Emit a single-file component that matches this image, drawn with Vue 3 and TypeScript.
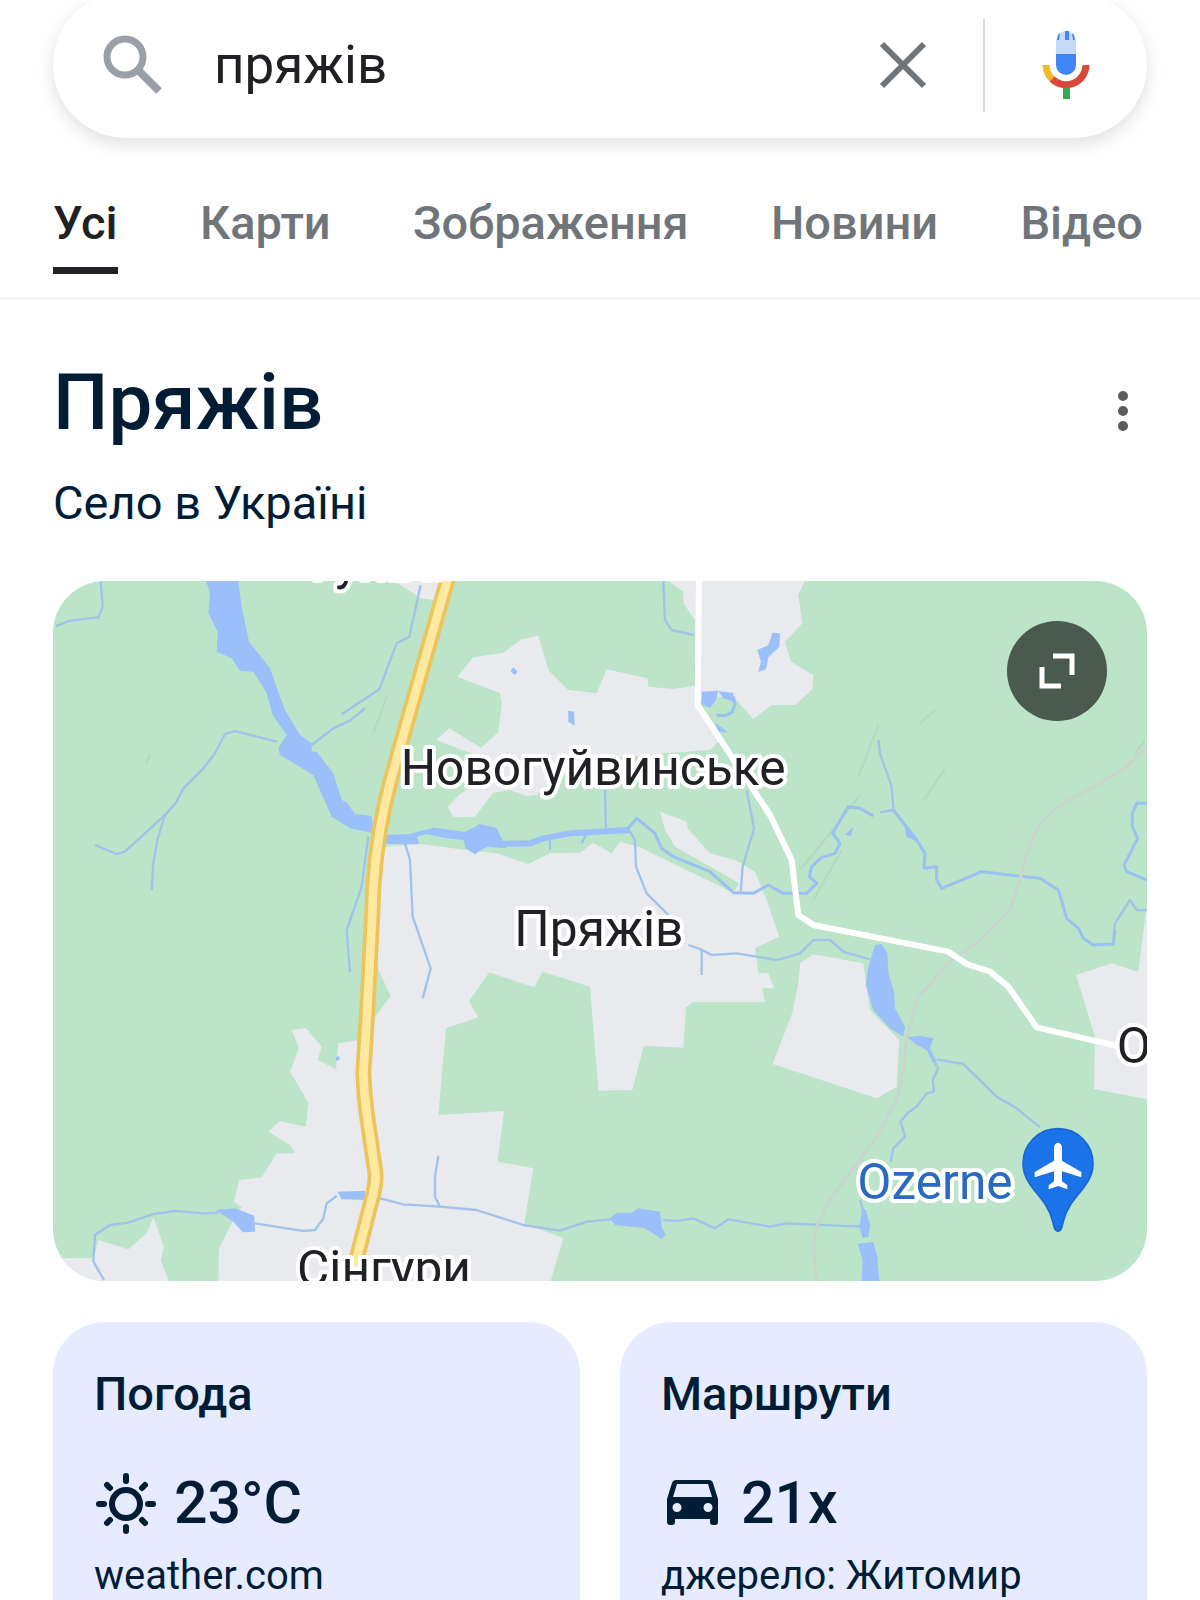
<script setup lang="ts">
import { ref } from 'vue'

interface Tab {
  id: string
  label: string
}

const query = ref('пряжів')
const activeTab = ref('all')

const tabs: Tab[] = [
  { id: 'all', label: 'Усі' },
  { id: 'maps', label: 'Карти' },
  { id: 'images', label: 'Зображення' },
  { id: 'news', label: 'Новини' },
  { id: 'video', label: 'Відео' },
]

const settlements: string[] = [
  '1030,33 1090,70 1110,85 1155,90 1175,33',
  '1222,320 1270,262 1360,248 1415,208 1465,197 1495,300 1555,360 1640,370 1670,298 1792,325 1795,350 1870,357 1935,347 1945,400 2010,510 1980,540 1870,548 1620,570 1500,640 1460,675 1430,678 1380,660 1330,668 1275,740 1210,742 1193,710 1230,672 1280,640 1290,560 1158,510 1198,475 1293,533 1345,487 1355,400 1350,370',
  '1855,33 1900,65 1900,100 1935,150 1943,400 1960,380 2050,380 2110,447 2165,405 2235,405 2287,358 2290,315 2223,275 2205,215 2257,160 2245,75 2265,33',
  '1005,830 1110,822 1250,840 1340,850 1435,882 1500,850 1590,848 1630,818 1685,850 1710,815 1770,832 2050,968 2068,940 1875,830 1845,780 1830,725 1912,755 1912,775 1980,850 2060,872 2115,905 2150,990 2188,1100 2115,1135 2125,1208 2155,1210 2172,1255 2137,1255 2145,1297 1930,1297 1908,1312 1900,1433 1782,1427 1747,1560 1645,1562 1620,1250 1478,1205 1453,1252 1318,1207 1257,1293 1285,1342 1188,1375 1165,1635 1362,1623 1343,1775 1450,1795 1423,1960 1540,2005 1502,2133 505,2133 507,2035 547,1955 575,1912 552,1895 568,1830 635,1822 680,1750 735,1750 720,1725 655,1685 690,1653 768,1670 775,1598 720,1505 747,1435 725,1380 768,1375 815,1430 803,1470 858,1498 865,1420 925,1410 975,1340 1022,1278 985,1200 975,1050',
  '9,2065 130,2065 145,2010 235,2038 290,1990 310,1940 342,2030 332,2070 357,2133 9,2133',
  '2250,1180 2290,1153 2440,1180 2460,1320 2548,1410 2540,1550 2480,1585 2168,1482 2228,1325 2245,1240',
  '3078,1215 3185,1180 3265,1205 3291,1000 3291,1588 3132,1557 3135,1400',
]

const lakes: string[] = [
  '468,33 565,33 575,110 597,215 660,295 672,330 705,420 750,495 785,520 785,545 800,545 850,610 875,690 890,697 915,732 965,738 972,790 900,775 845,740 790,615 690,555 685,535 710,495 668,435 650,370 610,305 570,303 545,265 500,245 503,185 475,130 480,70',
  '1000,795 1080,792 1150,773 1190,778 1245,786 1290,762 1340,775 1362,820 1368,835 1310,830 1275,853 1247,835 1240,810 1190,805 1130,792 1100,800 1108,822 1010,822',
  '1390,292 1403,305 1393,315 1382,303',
  '1555,422 1572,425 1574,467 1555,455',
  '2168,188 2190,190 2188,230 2155,262 2148,298 2125,305 2133,275 2122,240 2155,225',
  '1955,365 2005,362 1998,390 1980,415 1955,402',
  '2005,364 2050,368 2052,395 2020,385',
  '1995,457 2035,488 2005,485',
  '2475,1125 2495,1122 2512,1150 2515,1210 2532,1265 2535,1315 2565,1370 2560,1400 2520,1375 2470,1320 2447,1245 2455,1190',
  '2572,1402 2610,1397 2650,1405 2640,1435 2662,1480 2650,1480 2630,1440 2600,1425',
  '2437,1915 2447,1920 2460,1965 2455,2000 2438,2005 2428,1970',
  '2423,2022 2470,2015 2482,2060 2488,2133 2435,2133 2438,2070',
  '497,1920 555,1915 613,1937 615,1985 578,1987 550,1955',
  '862,1865 945,1862 945,1890 875,1888',
  '1680,1945 1700,1928 1745,1928 1765,1915 1830,1925 1835,1970 1847,1995 1835,2007 1785,1975 1695,1965',
  '2562,765 2580,785 2600,800 2600,815 2570,800',
  '2385,795 2410,770 2402,798',
  '858,1462 868,1458 868,1470 858,1472',
]

const streams: string[] = [
  '18,168 60,152 145,142 158,110 152,35',
  '680,515 555,483 525,492 495,550 460,595 400,655 380,695 350,730 225,845 200,852 135,825',
  '345,735 322,810 310,880 305,960',
  '785,525 850,475 900,452 945,415',
  '875,433 988,358 1040,220 1078,200 1112,45',
  '955,800 935,950 890,1080 900,1205',
  '1065,820 1080,870 1088,1040 1142,1195 1118,1285',
  '1840,35 1845,150 1865,180 1930,195',
  '1665,660 1668,775',
  '1740,785 1755,810 1758,890 1790,970 1855,1035',
  '1915,1125 1950,1137 1985,1155 2060,1150 2180,1170 2250,1150 2290,1110 2340,1110 2380,1145 2460,1168',
  '1955,1140 1955,1215',
  '2090,660 2112,775 2078,890 2072,965',
  '2485,510 2490,550 2525,650 2530,720 2490,727',
  '3190,1100 3195,1060 3240,990 3260,1020 3291,1020',
  '2660,1468 2740,1482 2840,1580 2900,1615 2970,1672',
  '2655,1480 2665,1495 2648,1530 2652,1565 2630,1570 2600,1610 2572,1630 2552,1655 2565,1700 2530,1735 2522,1775',
  '2430,1890 2442,1930',
  '162,2130 130,2075 135,1995 180,1965 235,1958 310,1932 375,1923 465,1930 505,1928',
  '615,1960 760,1983 795,1980 820,1945 830,1900 860,1878',
  '990,1885 1060,1903 1170,1910 1280,1920 1420,1965 1530,1982 1610,1955 1685,1948',
  '1840,1950 1880,1953 1930,1945 1995,1975 2035,1948 2160,1970 2210,1960 2430,1970',
  '1165,1758 1155,1820 1155,1880 1170,1910',
  '1500,810 1500,840',
  '1610,790 1595,820',
]

const rivers: string[] = [
  '1730,780 1760,745 1815,790 1835,835 1870,860 1980,905 2050,968 2110,970 2155,945 2200,970 2270,970 2300,940 2278,920 2285,890 2315,862 2355,850 2370,820 2348,790 2395,710 2430,715 2470,738',
  '2530,720 2565,765 2600,810 2625,850 2622,895 2660,890 2660,930 2675,955 2795,905 2860,913 2970,925 3025,960 3050,1045 3085,1075 3100,1105 3130,1125 3190,1122 3195,1080',
  '3291,700 3260,700 3247,730 3247,770 3263,805 3222,885 3230,905 3291,930',
  '2050,380 2055,405 2045,428 2025,437 2000,435',
]

const reliefs: string[] = [
  '2485,465 2445,570 2425,620',
  '2430,675 2340,790 2250,900',
  '2655,420 2610,460',
  '2685,598 2620,690',
  '2375,840 2290,990',
  '1010,380 970,490',
  '300,555 288,580',
  '3285,510 3255,550',
]
</script>

<template>
  <div class="page">
    <header class="header">
      <form class="search" role="search" @submit.prevent>
        <svg class="search-icon" viewBox="0 0 60 60" aria-hidden="true">
          <circle cx="23" cy="22" r="18" fill="none" stroke="#9aa0a6" stroke-width="7" />
          <path d="M36 35L57 56" stroke="#9aa0a6" stroke-width="8" />
        </svg>
        <input v-model="query" class="search-input" type="text" aria-label="Пошук" />
        <button class="icon-button clear" type="button" aria-label="Очистити" @click="query = ''">
          <svg viewBox="0 0 48 48"><path d="M3 3L45 45M45 3L3 45" stroke="#70757a" stroke-width="6" /></svg>
        </button>
        <span class="divider"></span>
        <button class="icon-button mic" type="button" aria-label="Голосовий пошук">
          <svg viewBox="0 0 50 70">
            <path d="M15 24V11a10 10 0 0 1 20 0v13z" fill="#c6dafc" />
            <path d="M15 24h20v11a10 10 0 0 1-20 0z" fill="#4285f4" />
            <path d="M24 1h4v9h-4zM17 5l2-2-1 7h-2zM33 5l-2-2 1 7h2z" fill="#4285f4" />
            <path d="M5 35a20 20 0 0 0 6 14" fill="none" stroke="#f4b928" stroke-width="7" />
            <path d="M11 49a20 20 0 0 0 34-14" fill="none" stroke="#d9493a" stroke-width="7" />
            <path d="M22 58h7v11h-7z" fill="#34a853" />
          </svg>
        </button>
      </form>
      <nav class="tabs">
        <a
          v-for="tab in tabs"
          :key="tab.id"
          href="#"
          class="tab"
          :class="{ active: tab.id === activeTab }"
          @click.prevent="activeTab = tab.id"
        >{{ tab.label }}</a>
      </nav>
    </header>

    <main class="content">
      <section class="entity">
        <div>
          <h1 class="title">Пряжів</h1>
          <p class="subtitle">Село в Україні</p>
        </div>
        <button class="icon-button more" type="button" aria-label="Більше">
          <svg viewBox="0 0 12 42" fill="#5c5c5c">
            <circle cx="6" cy="6" r="5" />
            <circle cx="6" cy="21" r="5" />
            <circle cx="6" cy="36" r="5" />
          </svg>
        </button>
      </section>

      <section class="map">
        <svg class="map-canvas" viewBox="9 33 3282 2100" role="img" aria-label="Карта">
          <rect x="9" y="33" width="3282" height="2100" fill="#bbe4c8" />
          <polyline v-for="(p, i) in reliefs" :key="'h' + i" :points="p" class="relief" />
          <polygon v-for="(p, i) in settlements" :key="'s' + i" :points="p" fill="#e8eaed" />
          <polyline v-for="(p, i) in streams" :key="'t' + i" :points="p" class="stream" />
          <polyline v-for="(p, i) in rivers" :key="'r' + i" :points="p" class="river" />
          <polyline points="1350,822 1440,820 1480,805 1560,790 1740,780" class="river wide" />
          <polygon v-for="(p, i) in lakes" :key="'l' + i" :points="p" class="lake" />
          <path
            class="rail"
            d="M3291 530L3230 590L3140 645L3050 695Q2975 740 2950 800L2925 870L2910 930L2880 1020L2790 1110L2700 1175L2605 1280L2570 1400L2560 1500L2540 1590L2480 1700L2340 1890L2300 1970Q2285 2030 2300 2133"
          />
          <polyline
            class="road-white"
            points="1947,20 1943,405 2160,735 2225,870 2245,1035 2290,1065 2695,1145 2750,1182 2820,1205 2875,1250 2960,1372 3210,1430"
          />
          <g class="highway">
            <path d="M1195 20L1056 510L1020 640Q982 780 970 950L966 1050L950 1350L940 1510Q942 1570 950 1630L975 1800Q980 1830 970 1870L915 2085" stroke="#ecc45c" stroke-width="48" />
            <path d="M1195 20L1056 510L1020 640Q982 780 970 950L966 1050L950 1350L940 1510Q942 1570 950 1630L975 1800Q980 1830 970 1870L915 2085" stroke="#ffe9a0" stroke-width="26" />
          </g>
          <g class="label">
            <text x="783" y="28">Гуйва</text>
            <text x="1052" y="645">Новогуйвинське</text>
            <text x="1393" y="1128">Пряжів</text>
            <text x="741" y="2147">Сінгури</text>
            <text x="3200" y="1480">Озерне</text>
            <text x="2422" y="1888" class="poi">Ozerne</text>
          </g>
          <path
            d="M3024 1984C3014 1984 3012 1970 3007 1950C2990 1880 2919 1850 2919 1781A105 105 0 0 1 3129 1781C3129 1850 3058 1880 3041 1950C3036 1970 3034 1984 3024 1984Z"
            fill="#1a73e8"
            stroke="#1967d2"
            stroke-width="5"
          />
          <path
            d="M3024 1718Q3036 1720 3036 1734V1772L3094 1806V1822L3036 1804V1834L3052 1846V1858L3024 1848L2996 1858V1846L3012 1834V1804L2954 1822V1806L3012 1772V1734Q3012 1720 3024 1718Z"
            fill="#fff"
          />
        </svg>
        <button class="expand" type="button" aria-label="Розгорнути карту">
          <svg viewBox="0 0 36 36" fill="none" stroke="#fff" stroke-width="5">
            <path d="M14 3H33V22M3 14V33H22" />
          </svg>
        </button>
      </section>

      <section class="cards">
        <article class="card">
          <h2 class="card-title">Погода</h2>
          <div class="card-value">
            <svg class="card-icon" viewBox="0 0 62 62" fill="none" stroke="#001d35" stroke-width="6" stroke-linecap="round" aria-hidden="true">
              <circle cx="32" cy="32" r="14" />
              <path d="M32 4v5M32 55v4M5 32h5M54 32h5M13 13l3 3M48 48l3 3M13 51l3-3M48 16l3-3" />
            </svg>
            <span>23°C</span>
          </div>
          <p class="card-note">weather.com</p>
        </article>
        <article class="card">
          <h2 class="card-title">Маршрути</h2>
          <div class="card-value">
            <svg class="card-icon" viewBox="0 0 62 62" aria-hidden="true">
              <path
                fill="#001d35"
                fill-rule="evenodd"
                d="M15 8H48Q51 8 52 11L57 27V50Q57 53 54 53H52Q49 53 49 50V47H14V50Q14 53 11 53H9Q6 53 6 50V27L11 11Q12 8 15 8ZM16 12L12 25H51L47 12ZM16 31a4 4 0 1 0 0 9a4 4 0 0 0 0-9ZM47 31a4 4 0 1 0 0 9a4 4 0 0 0 0-9Z"
              />
            </svg>
            <span>21х</span>
          </div>
          <p class="card-note">джерело: Житомир</p>
        </article>
      </section>
    </main>
  </div>
</template>

<style>
body {
  margin: 0;
  background: #fefefe;
}
</style>

<style scoped>
.page {
  display: flex;
  flex-direction: column;
  min-height: 100vh;
  overflow: hidden;
  font-family: Roboto, "Noto Sans", sans-serif;
  color: #001d35;
}

.header {
  display: flow-root;
  padding: 0 53px 23px;
  border-bottom: 3px solid #f6f6f6;
}

.search {
  display: flex;
  align-items: center;
  box-sizing: border-box;
  height: 146px;
  margin-top: -8px;
  padding: 0 56px 0 49px;
  border-radius: 73px;
  background: #fff;
  box-shadow: 0 6px 16px rgba(0, 0, 0, 0.12);
}

.search-icon {
  flex: none;
  width: 60px;
  height: 60px;
}

.search-input {
  flex: 1;
  min-width: 0;
  height: 72px;
  margin-left: 52px;
  padding: 0;
  border: 0;
  outline: 0;
  background: none;
  color: #202124;
  font: 400 53px/72px Roboto, "Noto Sans", sans-serif;
}

.icon-button {
  flex: none;
  padding: 0;
  border: 0;
  background: none;
  cursor: pointer;
}

.icon-button svg {
  display: block;
  width: 100%;
}

.clear {
  width: 48px;
}

.divider {
  width: 2px;
  height: 94px;
  margin: 0 56px;
  background: #dadce0;
}

.mic {
  width: 50px;
}

.tabs {
  display: flex;
  justify-content: space-between;
  margin-top: 57px;
  padding-right: 4px;
}

.tab {
  padding-bottom: 16px;
  border-bottom: 7px solid transparent;
  color: #70757a;
  font-size: 47px;
  font-weight: 500;
  line-height: 56px;
  text-decoration: none;
  white-space: nowrap;
}

.tab.active {
  border-color: #202124;
  color: #202124;
}

.content {
  display: flex;
  flex: 1;
  flex-direction: column;
  padding: 55px 53px 0;
}

.entity {
  display: flex;
  justify-content: space-between;
  align-items: flex-start;
}

.title {
  margin: 0;
  font-size: 78px;
  font-weight: 500;
  line-height: 96px;
}

.subtitle {
  margin: 24px 0 0;
  font-size: 47px;
  line-height: 56px;
}

.more {
  width: 12px;
  margin: 35px 18px 0 0;
}

.map {
  position: relative;
  margin-top: 50px;
  overflow: hidden;
  border-radius: 52px;
}

.map-canvas {
  display: block;
  width: 100%;
  height: auto;
}

.relief {
  fill: none;
  stroke: #b2dabe;
  stroke-width: 6;
}

.stream {
  fill: none;
  stroke: #9fc3ea;
  stroke-width: 7;
  stroke-linejoin: round;
}

.river {
  fill: none;
  stroke: #9bc0f2;
  stroke-width: 9;
  stroke-linejoin: round;
}

.river.wide {
  stroke: #9bbffb;
  stroke-width: 18;
}

.lake {
  fill: #9bbffb;
}

.rail {
  fill: none;
  stroke: #cad5ce;
  stroke-width: 9;
}

.road-white {
  fill: none;
  stroke: #fff;
  stroke-width: 18;
  stroke-linejoin: round;
}

.highway {
  fill: none;
  stroke-linejoin: round;
}

.label {
  fill: #202124;
  stroke: #fff;
  stroke-width: 24;
  stroke-linejoin: round;
  paint-order: stroke;
  font-size: 149px;
}

.poi {
  fill: #2a6ac0;
}

.expand {
  position: absolute;
  top: 40px;
  right: 40px;
  display: flex;
  align-items: center;
  justify-content: center;
  width: 100px;
  height: 100px;
  padding: 0;
  border: 0;
  border-radius: 50%;
  background: #4a5a4f;
  cursor: pointer;
}

.expand svg {
  width: 36px;
  height: 36px;
}

.cards {
  display: flex;
  flex: 1;
  gap: 40px;
  margin-top: 41px;
}

.card {
  flex: 1;
  padding: 44px 41px 0;
  border-radius: 52px 52px 0 0;
  background: #e6ebff;
}

.card-title {
  margin: 0;
  font-size: 47px;
  font-weight: 500;
  line-height: 56px;
}

.card-value {
  display: flex;
  align-items: center;
  gap: 18px;
  margin-top: 45px;
  font-size: 59px;
  font-weight: 500;
  line-height: 72px;
}

.card-icon {
  width: 62px;
  height: 62px;
}

.card-note {
  margin: 13px 0 0;
  font-size: 40px;
  line-height: 48px;
}
</style>
